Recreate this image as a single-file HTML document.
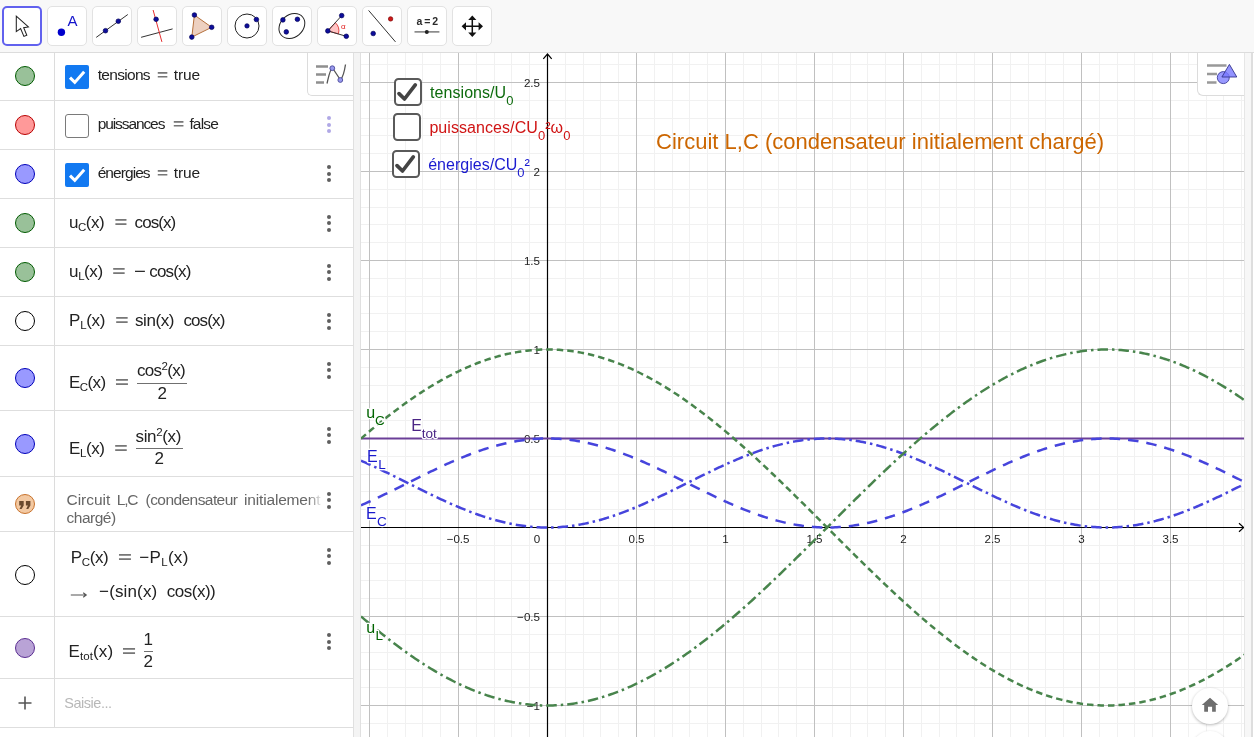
<!DOCTYPE html>
<html lang="fr"><head><meta charset="utf-8"><title>Circuit L,C</title>
<style>
html,body{margin:0;padding:0;width:1254px;height:737px;overflow:hidden;background:#fff;font-family:"Liberation Sans",Arial,sans-serif;}
*{box-sizing:border-box;}
#tb{will-change:transform;position:absolute;left:0;top:0;width:1254px;height:53px;background:#f8f8f8;border-bottom:1px solid #dcdcdc;}
.tbtn{position:absolute;top:6px;width:40px;height:40px;background:#fff;border:1px solid #e2e2e2;border-radius:5px;}
.tbtn.sel{border:2px solid #6161ee;}
.tbtn svg{position:absolute;left:-1px;top:-1px;width:40px;height:40px;}
.tbtn.sel svg{left:-2px;top:-2px;}
#av{will-change:transform;position:absolute;left:0;top:53px;width:353px;height:684px;background:#fff;overflow:hidden;}
.row{position:absolute;left:0;width:353px;border-bottom:1px solid #dedede;}
.row .mc{position:absolute;left:0;top:0;bottom:0;width:55px;border-right:1px solid #dcdcdc;}
.marble{position:absolute;left:15px;width:20px;height:20px;border-radius:50%;border:1px solid #000;}
.t{position:absolute;white-space:nowrap;color:#222;font-size:15.5px;line-height:20px;}
.t sub{font-size:11.5px;vertical-align:baseline;position:relative;top:3px;line-height:0;}
.t sup{font-size:11.5px;vertical-align:baseline;position:relative;top:-6px;line-height:0;}
.dots{position:absolute;left:326px;width:6px;height:18px;}
.dots i{position:absolute;left:1px;width:4px;height:4px;border-radius:50%;background:#5f5f5f;}
.dots i:nth-child(1){top:0}.dots i:nth-child(2){top:6.5px}.dots i:nth-child(3){top:13px}
.dots.lav i{background:#b0a8e6;}
.cb{position:absolute;left:65px;width:24px;height:24px;border-radius:2px;}
.cb.on{background:#1279f1;}
.cb.off{background:#fff;border:1px solid #7a7a7a;border-radius:3px;}
.frac{position:absolute;text-align:center;}
.bar{position:absolute;height:1px;background:#707070;}
#split{position:absolute;left:353px;top:53px;width:8px;height:684px;background:#f4f4f4;border-left:1px solid #e0e0e0;border-right:1px solid #e0e0e0;}
#ev{will-change:transform;position:absolute;left:361px;top:53px;width:883px;height:684px;background:#fff;overflow:hidden;}
#ev svg.g{position:absolute;left:0;top:0;}
#rs{position:absolute;left:1244px;top:53px;width:10px;height:684px;background:#f7f7f7;border-left:1px solid #e6e6e6;}
#rs b{position:absolute;left:6px;top:0;width:2px;height:684px;background:#dedede;}
#rs u{position:absolute;left:8px;top:0;width:1px;height:684px;background:#fff;}
.evcb{position:absolute;width:28px;height:28px;border:2px solid #5a5a5a;border-radius:4.5px;background:#fff;}
.evt{position:absolute;white-space:nowrap;font-size:16px;line-height:18px;}
.evt sub{font-size:13px;vertical-align:baseline;position:relative;top:7px;line-height:0;}
.evt sup{font-size:11px;vertical-align:baseline;position:relative;top:-5px;line-height:0;font-weight:bold;}
.stylebtn{position:absolute;background:#fff;border:1px solid #dcdcdc;}
</style></head>
<body>
<div id="tb">
<div class="tbtn sel" style="left:2px"><svg viewBox="0 0 40 40"><path d="M14.3 10.2 V25.6 L18.6 22.6 L21.9 30.4 L24.8 29.2 L21.7 21.7 L26.4 20.9 Z" fill="#fff" stroke="#222" stroke-width="1.05" stroke-linejoin="miter"/></svg></div>
<div class="tbtn" style="left:47px"><svg viewBox="0 0 40 40"><circle cx="14.4" cy="26.2" r="3.7" fill="#0000cc"/><text x="20.6" y="20" font-family="Liberation Sans,Arial,sans-serif" font-size="15" fill="#1414cc">A</text></svg></div>
<div class="tbtn" style="left:92px"><svg viewBox="0 0 40 40"><path d="M4.2 31.4 L35.8 8.5" stroke="#333" stroke-width="1"/><circle cx="13.5" cy="24.7" r="2.3" fill="#0d0d9a" stroke="#00005a" stroke-width="0.7"/><circle cx="26.3" cy="15.2" r="2.3" fill="#0d0d9a" stroke="#00005a" stroke-width="0.7"/></svg></div>
<div class="tbtn" style="left:137px"><svg viewBox="0 0 40 40"><path d="M4.1 31.3 L35.6 22.9" stroke="#333" stroke-width="1"/><path d="M16.1 4 L24.9 35.9" stroke="#e63030" stroke-width="1"/><circle cx="19.1" cy="13.3" r="2.3" fill="#0d0d9a" stroke="#00005a" stroke-width="0.7"/></svg></div>
<div class="tbtn" style="left:182px"><svg viewBox="0 0 40 40"><path d="M12.4 9 L29.7 21.3 L9.8 31.1 Z" fill="#edd0c0" stroke="#b5703c" stroke-width="1"/><circle cx="12.4" cy="9" r="2.3" fill="#0d0d9a" stroke="#00005a" stroke-width="0.7"/><circle cx="29.7" cy="21.3" r="2.3" fill="#0d0d9a" stroke="#00005a" stroke-width="0.7"/><circle cx="9.8" cy="31.1" r="2.3" fill="#0d0d9a" stroke="#00005a" stroke-width="0.7"/></svg></div>
<div class="tbtn" style="left:227px"><svg viewBox="0 0 40 40"><circle cx="20" cy="20" r="12" fill="none" stroke="#222" stroke-width="1"/><circle cx="20" cy="19.9" r="2.2" fill="#0d0d9a" stroke="#00005a" stroke-width="0.7"/><circle cx="29.4" cy="13.5" r="2.3" fill="#0d0d9a" stroke="#00005a" stroke-width="0.7"/></svg></div>
<div class="tbtn" style="left:272px"><svg viewBox="0 0 40 40"><ellipse cx="19.9" cy="20" rx="14" ry="11.2" transform="rotate(-40 19.9 20)" fill="none" stroke="#222" stroke-width="1"/><circle cx="10.9" cy="13.9" r="2.3" fill="#0d0d9a" stroke="#00005a" stroke-width="0.7"/><circle cx="25.4" cy="13.3" r="2.3" fill="#0d0d9a" stroke="#00005a" stroke-width="0.7"/><circle cx="14.3" cy="25.9" r="2.3" fill="#0d0d9a" stroke="#00005a" stroke-width="0.7"/></svg></div>
<div class="tbtn" style="left:317px"><svg viewBox="0 0 40 40"><path d="M10.8 24.9 L18.3 16.7 A11 11 0 0 1 21.4 27.9 Z" fill="#ffc4c4" stroke="#e03030" stroke-width="0.9"/><path d="M24.7 9.6 L10.8 24.9 L29.3 30.3" fill="none" stroke="#333" stroke-width="1"/><circle cx="10.8" cy="24.9" r="2.3" fill="#0d0d9a" stroke="#00005a" stroke-width="0.7"/><circle cx="24.7" cy="9.6" r="2.3" fill="#0d0d9a" stroke="#00005a" stroke-width="0.7"/><circle cx="29.3" cy="30.3" r="2.3" fill="#0d0d9a" stroke="#00005a" stroke-width="0.7"/><text x="24" y="23" font-family="Liberation Sans,Arial,sans-serif" font-size="8" fill="#e02020">α</text></svg></div>
<div class="tbtn" style="left:362px"><svg viewBox="0 0 40 40"><path d="M6.6 4.4 L33.5 35.9" stroke="#333" stroke-width="1"/><circle cx="11.2" cy="27.5" r="2.3" fill="#0d0d9a" stroke="#00005a" stroke-width="0.7"/><circle cx="28.6" cy="12.9" r="2.2" fill="#cc1a1a" stroke="#800000" stroke-width="0.7"/></svg></div>
<div class="tbtn" style="left:407px"><svg viewBox="0 0 40 40"><text x="20" y="18.8" text-anchor="middle" font-family="Liberation Sans,Arial,sans-serif" font-size="10.5" font-weight="bold" letter-spacing="-0.5" fill="#2a2a2a">a = 2</text><path d="M7.5 25.9 H32.4" stroke="#666" stroke-width="1.3"/><circle cx="19.8" cy="25.9" r="2" fill="#222"/></svg></div>
<div class="tbtn" style="left:452px"><svg viewBox="0 0 40 40"><path d="M20.3 12 V28.6 M12 20.3 H28.6" stroke="#111" stroke-width="1.5"/><path d="M20.3 9.6 l4.1 4.4 h-8.2z M20.3 31 l4.1 -4.4 h-8.2z M9.6 20.3 l4.4 -4.1 v8.2z M31 20.3 l-4.4 -4.1 v8.2z" fill="#111"/></svg></div>

</div>
<div id="av">
<div class="row" style="top:0px;height:48px"><div class="mc"></div></div>
<div class="marble" style="top:12.5px;background:#99c199;border-color:#005a00"></div>
<div class="row" style="top:48px;height:49px"><div class="mc"></div></div>
<div class="marble" style="top:61.5px;background:#ff9999;border-color:#b80000"></div>
<div class="dots lav" style="top:63.0px"><i></i><i></i><i></i></div>
<div class="row" style="top:97px;height:49px"><div class="mc"></div></div>
<div class="marble" style="top:110.5px;background:#9999ff;border-color:#0000b8"></div>
<div class="dots " style="top:112.0px"><i></i><i></i><i></i></div>
<div class="row" style="top:146px;height:49px"><div class="mc"></div></div>
<div class="marble" style="top:160.0px;background:#99c199;border-color:#005a00"></div>
<div class="dots " style="top:161.5px"><i></i><i></i><i></i></div>
<div class="row" style="top:195px;height:49px"><div class="mc"></div></div>
<div class="marble" style="top:209.0px;background:#99c199;border-color:#005a00"></div>
<div class="dots " style="top:210.5px"><i></i><i></i><i></i></div>
<div class="row" style="top:244px;height:49px"><div class="mc"></div></div>
<div class="marble" style="top:258.0px;background:#fff;border-color:#000"></div>
<div class="dots " style="top:259.5px"><i></i><i></i><i></i></div>
<div class="row" style="top:293px;height:65px"><div class="mc"></div></div>
<div class="marble" style="top:315.0px;background:#9999ff;border-color:#0000b8"></div>
<div class="dots " style="top:308.5px"><i></i><i></i><i></i></div>
<div class="row" style="top:358px;height:66px"><div class="mc"></div></div>
<div class="marble" style="top:380.5px;background:#9999ff;border-color:#0000b8"></div>
<div class="dots " style="top:373.5px"><i></i><i></i><i></i></div>
<div class="row" style="top:424px;height:55px"><div class="mc"></div></div>
<div class="dots " style="top:438.5px"><i></i><i></i><i></i></div>
<div class="row" style="top:479px;height:85px"><div class="mc"></div></div>
<div class="marble" style="top:511.5px;background:#fff;border-color:#000"></div>
<div class="dots " style="top:494.5px"><i></i><i></i><i></i></div>
<div class="row" style="top:564px;height:62px"><div class="mc"></div></div>
<div class="marble" style="top:585.0px;background:#b9a3d6;border-color:#5a2d91"></div>
<div class="dots " style="top:580.0px"><i></i><i></i><i></i></div>
<div class="row" style="top:626px;height:49px"><div class="mc"></div></div>
<div class="cb on" style="top:12px"><svg viewBox="0 0 24 24" width="24" height="24" style="position:absolute;left:0;top:0"><path d="M5 12.6 L9.8 17.4 L19.2 6.8" fill="none" stroke="#fff" stroke-width="3"/></svg></div><div class="cb off" style="top:61px"></div><div class="cb on" style="top:110px"><svg viewBox="0 0 24 24" width="24" height="24" style="position:absolute;left:0;top:0"><path d="M5 12.6 L9.8 17.4 L19.2 6.8" fill="none" stroke="#fff" stroke-width="3"/></svg></div>
<div class="marble" style="top:441.0px;background:#f3c9a2;border-color:#c8722c"><svg viewBox="0 0 18 18" width="18" height="18" style="position:absolute;left:0;top:0"><path d="M3.2 6h4.5v4.6l-2.1 3.3h-2.1l1.7-3.3h-2z M9.9 6h4.5v4.6l-2.1 3.3h-2.1l1.7-3.3h-2z" fill="#6b4a2e"/></svg></div>
<svg style="position:absolute;left:17px;top:642px" width="16" height="16" viewBox="0 0 16 16"><path d="M8 1.5 V14.5 M1.5 8 H14.5" stroke="#555" stroke-width="1.6"/></svg>
<div class="stylebtn" style="left:307px;top:-1px;width:47px;height:44px;border-radius:0 0 0 5px;border-top:none;border-right:none"><svg viewBox="0 0 46 43" width="46" height="43" style="position:absolute;left:-0.8px;top:0.9px"><path d="M9 13.5h12 M9 21.5h10 M9 29.5h8" stroke="#8f8f8f" stroke-width="2.4"/><path d="M20 30.5 C22 22 23 16 25.5 15 L33.5 27 C36 24 37.5 18 38.5 11.5" fill="none" stroke="#555" stroke-width="1.3"/><circle cx="25.3" cy="15.2" r="2.4" fill="#9999ee" stroke="#4a4a9a" stroke-width="0.9"/><circle cx="33.3" cy="27" r="2.4" fill="#9999ee" stroke="#4a4a9a" stroke-width="0.9"/></svg></div>
<svg style="position:absolute;left:70px;top:537.3px" width="18" height="10" viewBox="0 0 18 10"><path d="M0.8 5 H16 M13.2 2.8 L16.2 5 L13.2 7.2" fill="none" stroke="#555" stroke-width="1.15"/></svg>
<div class="bar" style="left:136.8px;top:329.7px;width:50.6px"></div>
<div class="bar" style="left:135.9px;top:395.3px;width:47.1px"></div>
<div class="bar" style="left:143.9px;top:597.8px;width:8.9px"></div>
<div class="t" id="t0" style="left:97.7px;top:12.13px;letter-spacing:-0.691px;font-size:15.5px;">tensions</div>
<div class="t" id="t1" style="left:158.1px;top:12.13px;letter-spacing:0.000px;font-size:15.5px;transform:scaleX(1.226);font-weight:bold;color:#777;">=</div>
<div class="t" id="t2" style="left:173.8px;top:12.13px;letter-spacing:-0.106px;font-size:15.5px;">true</div>
<div class="t" id="t3" style="left:97.7px;top:61.13px;letter-spacing:-1.094px;font-size:15.5px;">puissances</div>
<div class="t" id="t4" style="left:173.7px;top:61.13px;letter-spacing:0.000px;font-size:15.5px;transform:scaleX(1.239);font-weight:bold;color:#777;">=</div>
<div class="t" id="t5" style="left:189.4px;top:61.13px;letter-spacing:-0.837px;font-size:15.5px;">false</div>
<div class="t" id="t6" style="left:97.7px;top:110.13px;letter-spacing:-0.938px;font-size:15.5px;">énergies</div>
<div class="t" id="t7" style="left:158.1px;top:110.13px;letter-spacing:0.000px;font-size:15.5px;transform:scaleX(1.226);font-weight:bold;color:#777;">=</div>
<div class="t" id="t8" style="left:173.8px;top:110.13px;letter-spacing:-0.106px;font-size:15.5px;">true</div>
<div class="t" id="t9" style="left:69.1px;top:160.01px;letter-spacing:-0.527px;font-size:17px;">u<sub>C</sub>(x)</div>
<div class="t" id="t10" style="left:115.7px;top:160.01px;letter-spacing:0.000px;font-size:17px;transform:scaleX(1.294);font-weight:bold;color:#777;">=</div>
<div class="t" id="t11" style="left:134.6px;top:160.01px;letter-spacing:-0.936px;font-size:17px;">cos(x)</div>
<div class="t" id="t12" style="left:69.1px;top:209.21px;letter-spacing:-0.426px;font-size:17px;">u<sub>L</sub>(x)</div>
<div class="t" id="t13" style="left:114.1px;top:209.21px;letter-spacing:0.000px;font-size:17px;transform:scaleX(1.341);font-weight:bold;color:#777;">=</div>
<div class="t" id="t14" style="left:134.8px;top:209.21px;letter-spacing:0.000px;font-size:17px;transform:scaleX(1.198);">−</div>
<div class="t" id="t15" style="left:149.3px;top:209.21px;letter-spacing:-0.836px;font-size:17px;">cos(x)</div>
<div class="t" id="t16" style="left:69.1px;top:258.11px;letter-spacing:-0.320px;font-size:17px;">P<sub>L</sub>(x)</div>
<div class="t" id="t17" style="left:116.5px;top:258.11px;letter-spacing:0.000px;font-size:17px;transform:scaleX(1.341);font-weight:bold;color:#777;">=</div>
<div class="t" id="t18" style="left:135.0px;top:258.11px;letter-spacing:-0.433px;font-size:17px;">sin(x)</div>
<div class="t" id="t19" style="left:183.4px;top:258.11px;letter-spacing:-0.876px;font-size:17px;">cos(x)</div>
<div class="t" id="t20" style="left:69.0px;top:320.21px;letter-spacing:-0.596px;font-size:17px;">E<sub>C</sub>(x)</div>
<div class="t" id="t21" style="left:117.0px;top:320.21px;letter-spacing:0.000px;font-size:17px;transform:scaleX(1.400);font-weight:bold;color:#777;">=</div>
<div class="t" id="t22" style="left:136.9px;top:307.91px;letter-spacing:-0.634px;font-size:17px;">cos<sup>2</sup>(x)</div>
<div class="t" id="t23" style="left:157.6px;top:330.91px;letter-spacing:0.000px;font-size:17px;">2</div>
<div class="t" id="t24" style="left:69.0px;top:385.71px;letter-spacing:-0.420px;font-size:17px;">E<sub>L</sub>(x)</div>
<div class="t" id="t25" style="left:115.9px;top:385.71px;letter-spacing:0.000px;font-size:17px;transform:scaleX(1.353);font-weight:bold;color:#777;">=</div>
<div class="t" id="t26" style="left:135.6px;top:374.31px;letter-spacing:-0.378px;font-size:17px;">sin<sup>2</sup>(x)</div>
<div class="t" id="t27" style="left:154.4px;top:396.31px;letter-spacing:0.000px;font-size:17px;">2</div>
<div class="t" id="t28" style="left:66.6px;top:437.13px;letter-spacing:-0.054px;font-size:15.5px;color:#666;">Circuit</div>
<div class="t" id="t29" style="left:116.7px;top:437.13px;letter-spacing:-1.162px;font-size:15.5px;color:#666;">L,C</div>
<div class="t" id="t30" style="left:145.6px;top:437.13px;letter-spacing:-0.566px;font-size:15.5px;color:#666;">(condensateur</div>
<div class="t" id="t31" style="left:244.1px;top:437.13px;letter-spacing:-0.182px;font-size:15.5px;color:#666;">initialement</div>
<div class="t" id="t32" style="left:66.6px;top:454.93px;letter-spacing:-0.510px;font-size:15.5px;color:#666;">chargé)</div>
<div class="t" id="t33" style="left:70.8px;top:494.91px;letter-spacing:-0.371px;font-size:17px;">P<sub>C</sub>(x)</div>
<div class="t" id="t34" style="left:119.9px;top:494.91px;letter-spacing:0.000px;font-size:17px;transform:scaleX(1.400);font-weight:bold;color:#777;">=</div>
<div class="t" id="t35" style="left:139.3px;top:494.91px;letter-spacing:0.297px;font-size:17px;">−P<sub>L</sub>(x)</div>
<div class="t" id="t36" style="left:99.1px;top:529.41px;letter-spacing:0.135px;font-size:17px;">−(sin(x)</div>
<div class="t" id="t37" style="left:166.8px;top:529.41px;letter-spacing:-0.492px;font-size:17px;">cos(x))</div>
<div class="t" id="t38" style="left:68.5px;top:588.61px;letter-spacing:0.105px;font-size:17px;">E<sub>tot</sub>(x)</div>
<div class="t" id="t39" style="left:123.5px;top:588.61px;letter-spacing:0.000px;font-size:17px;transform:scaleX(1.412);font-weight:bold;color:#777;">=</div>
<div class="t" id="t40" style="left:143.6px;top:576.51px;letter-spacing:0.000px;font-size:17px;">1</div>
<div class="t" id="t41" style="left:143.6px;top:599.11px;letter-spacing:0.000px;font-size:17px;">2</div>
<div class="t" id="t42" style="left:64.3px;top:639.78px;letter-spacing:-0.474px;font-size:14.5px;color:#b8b8b8;">Saisie...</div>
<div style="position:absolute;left:308px;top:437px;width:16px;height:20px;background:linear-gradient(to right,rgba(255,255,255,0),rgba(255,255,255,0.9) 85%)"></div>

</div>
<div id="split"></div>
<div id="ev">
<svg class="g" width="883" height="684" viewBox="361 53 883 684">
<path d="M387.5 53 V737M405.5 53 V737M422.5 53 V737M440.5 53 V737M476.5 53 V737M494.5 53 V737M511.5 53 V737M529.5 53 V737M565.5 53 V737M583.5 53 V737M600.5 53 V737M618.5 53 V737M654.5 53 V737M672.5 53 V737M689.5 53 V737M707.5 53 V737M743.5 53 V737M761.5 53 V737M778.5 53 V737M796.5 53 V737M832.5 53 V737M850.5 53 V737M867.5 53 V737M885.5 53 V737M921.5 53 V737M939.5 53 V737M956.5 53 V737M974.5 53 V737M1010.5 53 V737M1028.5 53 V737M1045.5 53 V737M1063.5 53 V737M1099.5 53 V737M1117.5 53 V737M1134.5 53 V737M1152.5 53 V737M1188.5 53 V737M1206.5 53 V737M1223.5 53 V737M1241.5 53 V737M361 64.5 H1244M361 100.5 H1244M361 118.5 H1244M361 135.5 H1244M361 153.5 H1244M361 189.5 H1244M361 207.5 H1244M361 224.5 H1244M361 242.5 H1244M361 278.5 H1244M361 296.5 H1244M361 313.5 H1244M361 331.5 H1244M361 367.5 H1244M361 385.5 H1244M361 402.5 H1244M361 420.5 H1244M361 456.5 H1244M361 474.5 H1244M361 491.5 H1244M361 509.5 H1244M361 545.5 H1244M361 563.5 H1244M361 580.5 H1244M361 598.5 H1244M361 634.5 H1244M361 652.5 H1244M361 669.5 H1244M361 687.5 H1244M361 723.5 H1244" stroke="#f1f1f1" stroke-width="1" fill="none"/><path d="M369.5 53 V737M458.5 53 V737M636.5 53 V737M725.5 53 V737M814.5 53 V737M903.5 53 V737M992.5 53 V737M1081.5 53 V737M1170.5 53 V737M361 82.5 H1244M361 171.5 H1244M361 260.5 H1244M361 349.5 H1244M361 438.5 H1244M361 616.5 H1244M361 705.5 H1244" stroke="#c0c0c0" stroke-width="1" fill="none"/><path d="M361 527.5 H1243.5 M547.5 737 V54.5" stroke="#000" stroke-width="1.2" fill="none"/><path d="M1239.0 523.3 L1243.8 527.5 L1239.0 531.7" stroke="#000" stroke-width="1.2" fill="none"/><path d="M543.3 58.8 L547.5 54.0 L551.7 58.8" stroke="#000" stroke-width="1.2" fill="none"/><g font-family="Liberation Sans, Arial, sans-serif" font-size="11.6" fill="#222"><text x="458.1" y="542.6" text-anchor="middle">−0.5</text><text x="636.5" y="542.6" text-anchor="middle">0.5</text><text x="725.5" y="542.6" text-anchor="middle">1</text><text x="814.5" y="542.6" text-anchor="middle">1.5</text><text x="903.5" y="542.6" text-anchor="middle">2</text><text x="992.5" y="542.6" text-anchor="middle">2.5</text><text x="1081.5" y="542.6" text-anchor="middle">3</text><text x="1170.5" y="542.6" text-anchor="middle">3.5</text><text x="537" y="542.6" text-anchor="middle">0</text><text x="540" y="86.8" text-anchor="end">2.5</text><text x="540" y="175.8" text-anchor="end">2</text><text x="540" y="264.8" text-anchor="end">1.5</text><text x="540" y="353.8" text-anchor="end">1</text><text x="540" y="442.8" text-anchor="end">0.5</text><text x="540" y="620.8" text-anchor="end">−0.5</text><text x="540" y="709.8" text-anchor="end">−1</text></g><path d="M361 438.5 H1244" stroke="#6b3f98" stroke-width="2.15" fill="none"/><path d="M361.00 505.29 L363.00 504.42 L365.00 503.54 L367.00 502.65 L369.00 501.75 L371.00 500.83 L373.00 499.91 L375.00 498.98 L377.00 498.05 L379.00 497.10 L381.00 496.15 L383.00 495.19 L385.00 494.23 L387.00 493.26 L389.00 492.28 L391.00 491.30 L393.00 490.32 L395.00 489.33 L397.00 488.34 L399.00 487.34 L401.00 486.35 L403.00 485.35 L405.00 484.35 L407.00 483.35 L409.00 482.35 L411.00 481.35 L413.00 480.35 L415.00 479.35 L417.00 478.36 L419.00 477.36 L421.00 476.37 L423.00 475.39 L425.00 474.40 L427.00 473.43 L429.00 472.45 L431.00 471.48 L433.00 470.52 L435.00 469.56 L437.00 468.61 L439.00 467.67 L441.00 466.74 L443.00 465.81 L445.00 464.89 L447.00 463.98 L449.00 463.08 L451.00 462.19 L453.00 461.32 L455.00 460.45 L457.00 459.59 L459.00 458.75 L461.00 457.91 L463.00 457.09 L465.00 456.29 L467.00 455.50 L469.00 454.72 L471.00 453.95 L473.00 453.20 L475.00 452.47 L477.00 451.75 L479.00 451.04 L481.00 450.35 L483.00 449.68 L485.00 449.03 L487.00 448.39 L489.00 447.77 L491.00 447.17 L493.00 446.59 L495.00 446.02 L497.00 445.47 L499.00 444.95 L501.00 444.44 L503.00 443.95 L505.00 443.48 L507.00 443.03 L509.00 442.60 L511.00 442.19 L513.00 441.80 L515.00 441.43 L517.00 441.09 L519.00 440.76 L521.00 440.46 L523.00 440.18 L525.00 439.91 L527.00 439.68 L529.00 439.46 L531.00 439.26 L533.00 439.09 L535.00 438.94 L537.00 438.81 L539.00 438.70 L541.00 438.62 L543.00 438.56 L545.00 438.52 L547.00 438.50 L549.00 438.51 L551.00 438.53 L553.00 438.58 L555.00 438.66 L557.00 438.75 L559.00 438.87 L561.00 439.01 L563.00 439.17 L565.00 439.36 L567.00 439.56 L569.00 439.79 L571.00 440.04 L573.00 440.31 L575.00 440.61 L577.00 440.92 L579.00 441.26 L581.00 441.62 L583.00 441.99 L585.00 442.39 L587.00 442.81 L589.00 443.25 L591.00 443.71 L593.00 444.19 L595.00 444.69 L597.00 445.21 L599.00 445.74 L601.00 446.30 L603.00 446.88 L605.00 447.47 L607.00 448.08 L609.00 448.71 L611.00 449.35 L613.00 450.02 L615.00 450.70 L617.00 451.39 L619.00 452.10 L621.00 452.83 L623.00 453.57 L625.00 454.33 L627.00 455.10 L629.00 455.89 L631.00 456.69 L633.00 457.50 L635.00 458.33 L637.00 459.17 L639.00 460.02 L641.00 460.88 L643.00 461.75 L645.00 462.64 L647.00 463.53 L649.00 464.44 L651.00 465.35 L653.00 466.27 L655.00 467.20 L657.00 468.14 L659.00 469.09 L661.00 470.04 L663.00 471.00 L665.00 471.97 L667.00 472.94 L669.00 473.91 L671.00 474.90 L673.00 475.88 L675.00 476.87 L677.00 477.86 L679.00 478.86 L681.00 479.85 L683.00 480.85 L685.00 481.85 L687.00 482.85 L689.00 483.85 L691.00 484.85 L693.00 485.85 L695.00 486.84 L697.00 487.84 L699.00 488.83 L701.00 489.82 L703.00 490.81 L705.00 491.79 L707.00 492.77 L709.00 493.74 L711.00 494.71 L713.00 495.67 L715.00 496.63 L717.00 497.58 L719.00 498.52 L721.00 499.45 L723.00 500.37 L725.00 501.29 L727.00 502.20 L729.00 503.10 L731.00 503.98 L733.00 504.86 L735.00 505.72 L737.00 506.58 L739.00 507.42 L741.00 508.25 L743.00 509.07 L745.00 509.87 L747.00 510.66 L749.00 511.44 L751.00 512.20 L753.00 512.95 L755.00 513.68 L757.00 514.39 L759.00 515.10 L761.00 515.78 L763.00 516.45 L765.00 517.10 L767.00 517.73 L769.00 518.35 L771.00 518.95 L773.00 519.53 L775.00 520.09 L777.00 520.63 L779.00 521.16 L781.00 521.66 L783.00 522.15 L785.00 522.61 L787.00 523.06 L789.00 523.48 L791.00 523.89 L793.00 524.27 L795.00 524.64 L797.00 524.98 L799.00 525.30 L801.00 525.60 L803.00 525.88 L805.00 526.13 L807.00 526.37 L809.00 526.58 L811.00 526.77 L813.00 526.94 L815.00 527.09 L817.00 527.21 L819.00 527.32 L821.00 527.40 L823.00 527.45 L825.00 527.49 L827.00 527.50 L829.00 527.49 L831.00 527.46 L833.00 527.40 L835.00 527.32 L837.00 527.23 L839.00 527.10 L841.00 526.96 L843.00 526.79 L845.00 526.60 L847.00 526.39 L849.00 526.16 L851.00 525.91 L853.00 525.63 L855.00 525.33 L857.00 525.01 L859.00 524.67 L861.00 524.31 L863.00 523.93 L865.00 523.53 L867.00 523.10 L869.00 522.66 L871.00 522.20 L873.00 521.71 L875.00 521.21 L877.00 520.69 L879.00 520.15 L881.00 519.59 L883.00 519.01 L885.00 518.41 L887.00 517.80 L889.00 517.16 L891.00 516.52 L893.00 515.85 L895.00 515.17 L897.00 514.47 L899.00 513.75 L901.00 513.02 L903.00 512.28 L905.00 511.52 L907.00 510.74 L909.00 509.95 L911.00 509.15 L913.00 508.33 L915.00 507.51 L917.00 506.66 L919.00 505.81 L921.00 504.95 L923.00 504.07 L925.00 503.19 L927.00 502.29 L929.00 501.38 L931.00 500.47 L933.00 499.54 L935.00 498.61 L937.00 497.67 L939.00 496.72 L941.00 495.77 L943.00 494.81 L945.00 493.84 L947.00 492.87 L949.00 491.89 L951.00 490.91 L953.00 489.92 L955.00 488.93 L957.00 487.94 L959.00 486.95 L961.00 485.95 L963.00 484.95 L965.00 483.95 L967.00 482.95 L969.00 481.95 L971.00 480.95 L973.00 479.95 L975.00 478.96 L977.00 477.96 L979.00 476.97 L981.00 475.98 L983.00 475.00 L985.00 474.01 L987.00 473.04 L989.00 472.06 L991.00 471.10 L993.00 470.14 L995.00 469.18 L997.00 468.24 L999.00 467.30 L1001.00 466.37 L1003.00 465.44 L1005.00 464.53 L1007.00 463.62 L1009.00 462.73 L1011.00 461.84 L1013.00 460.97 L1015.00 460.10 L1017.00 459.25 L1019.00 458.41 L1021.00 457.59 L1023.00 456.77 L1025.00 455.97 L1027.00 455.18 L1029.00 454.41 L1031.00 453.65 L1033.00 452.91 L1035.00 452.18 L1037.00 451.46 L1039.00 450.77 L1041.00 450.09 L1043.00 449.42 L1045.00 448.77 L1047.00 448.14 L1049.00 447.53 L1051.00 446.94 L1053.00 446.36 L1055.00 445.80 L1057.00 445.26 L1059.00 444.74 L1061.00 444.24 L1063.00 443.76 L1065.00 443.30 L1067.00 442.86 L1069.00 442.43 L1071.00 442.03 L1073.00 441.65 L1075.00 441.29 L1077.00 440.96 L1079.00 440.64 L1081.00 440.34 L1083.00 440.07 L1085.00 439.82 L1087.00 439.59 L1089.00 439.38 L1091.00 439.19 L1093.00 439.03 L1095.00 438.88 L1097.00 438.76 L1099.00 438.67 L1101.00 438.59 L1103.00 438.54 L1105.00 438.51 L1107.00 438.50 L1109.00 438.51 L1111.00 438.55 L1113.00 438.61 L1115.00 438.69 L1117.00 438.80 L1119.00 438.92 L1121.00 439.07 L1123.00 439.24 L1125.00 439.44 L1127.00 439.65 L1129.00 439.89 L1131.00 440.15 L1133.00 440.43 L1135.00 440.73 L1137.00 441.05 L1139.00 441.40 L1141.00 441.76 L1143.00 442.15 L1145.00 442.56 L1147.00 442.98 L1149.00 443.43 L1151.00 443.90 L1153.00 444.39 L1155.00 444.89 L1157.00 445.42 L1159.00 445.96 L1161.00 446.53 L1163.00 447.11 L1165.00 447.71 L1167.00 448.33 L1169.00 448.96 L1171.00 449.62 L1173.00 450.29 L1175.00 450.97 L1177.00 451.67 L1179.00 452.39 L1181.00 453.13 L1183.00 453.87 L1185.00 454.64 L1187.00 455.42 L1189.00 456.21 L1191.00 457.01 L1193.00 457.83 L1195.00 458.66 L1197.00 459.50 L1199.00 460.36 L1201.00 461.23 L1203.00 462.10 L1205.00 462.99 L1207.00 463.89 L1209.00 464.80 L1211.00 465.71 L1213.00 466.64 L1215.00 467.57 L1217.00 468.52 L1219.00 469.47 L1221.00 470.42 L1223.00 471.38 L1225.00 472.35 L1227.00 473.33 L1229.00 474.30 L1231.00 475.29 L1233.00 476.27 L1235.00 477.26 L1237.00 478.26 L1239.00 479.25 L1241.00 480.25 L1243.00 481.25 L1245.00 482.25" stroke="#4644dc" stroke-width="2.5" fill="none" stroke-dasharray="10.5 8"/><path d="M361.00 460.71 L363.00 461.58 L365.00 462.46 L367.00 463.35 L369.00 464.25 L371.00 465.17 L373.00 466.09 L375.00 467.02 L377.00 467.95 L379.00 468.90 L381.00 469.85 L383.00 470.81 L385.00 471.77 L387.00 472.74 L389.00 473.72 L391.00 474.70 L393.00 475.68 L395.00 476.67 L397.00 477.66 L399.00 478.66 L401.00 479.65 L403.00 480.65 L405.00 481.65 L407.00 482.65 L409.00 483.65 L411.00 484.65 L413.00 485.65 L415.00 486.65 L417.00 487.64 L419.00 488.64 L421.00 489.63 L423.00 490.61 L425.00 491.60 L427.00 492.57 L429.00 493.55 L431.00 494.52 L433.00 495.48 L435.00 496.44 L437.00 497.39 L439.00 498.33 L441.00 499.26 L443.00 500.19 L445.00 501.11 L447.00 502.02 L449.00 502.92 L451.00 503.81 L453.00 504.68 L455.00 505.55 L457.00 506.41 L459.00 507.25 L461.00 508.09 L463.00 508.91 L465.00 509.71 L467.00 510.50 L469.00 511.28 L471.00 512.05 L473.00 512.80 L475.00 513.53 L477.00 514.25 L479.00 514.96 L481.00 515.65 L483.00 516.32 L485.00 516.97 L487.00 517.61 L489.00 518.23 L491.00 518.83 L493.00 519.41 L495.00 519.98 L497.00 520.53 L499.00 521.05 L501.00 521.56 L503.00 522.05 L505.00 522.52 L507.00 522.97 L509.00 523.40 L511.00 523.81 L513.00 524.20 L515.00 524.57 L517.00 524.91 L519.00 525.24 L521.00 525.54 L523.00 525.82 L525.00 526.09 L527.00 526.32 L529.00 526.54 L531.00 526.74 L533.00 526.91 L535.00 527.06 L537.00 527.19 L539.00 527.30 L541.00 527.38 L543.00 527.44 L545.00 527.48 L547.00 527.50 L549.00 527.49 L551.00 527.47 L553.00 527.42 L555.00 527.34 L557.00 527.25 L559.00 527.13 L561.00 526.99 L563.00 526.83 L565.00 526.64 L567.00 526.44 L569.00 526.21 L571.00 525.96 L573.00 525.69 L575.00 525.39 L577.00 525.08 L579.00 524.74 L581.00 524.38 L583.00 524.01 L585.00 523.61 L587.00 523.19 L589.00 522.75 L591.00 522.29 L593.00 521.81 L595.00 521.31 L597.00 520.79 L599.00 520.26 L601.00 519.70 L603.00 519.12 L605.00 518.53 L607.00 517.92 L609.00 517.29 L611.00 516.65 L613.00 515.98 L615.00 515.30 L617.00 514.61 L619.00 513.90 L621.00 513.17 L623.00 512.43 L625.00 511.67 L627.00 510.90 L629.00 510.11 L631.00 509.31 L633.00 508.50 L635.00 507.67 L637.00 506.83 L639.00 505.98 L641.00 505.12 L643.00 504.25 L645.00 503.36 L647.00 502.47 L649.00 501.56 L651.00 500.65 L653.00 499.73 L655.00 498.80 L657.00 497.86 L659.00 496.91 L661.00 495.96 L663.00 495.00 L665.00 494.03 L667.00 493.06 L669.00 492.09 L671.00 491.10 L673.00 490.12 L675.00 489.13 L677.00 488.14 L679.00 487.14 L681.00 486.15 L683.00 485.15 L685.00 484.15 L687.00 483.15 L689.00 482.15 L691.00 481.15 L693.00 480.15 L695.00 479.16 L697.00 478.16 L699.00 477.17 L701.00 476.18 L703.00 475.19 L705.00 474.21 L707.00 473.23 L709.00 472.26 L711.00 471.29 L713.00 470.33 L715.00 469.37 L717.00 468.42 L719.00 467.48 L721.00 466.55 L723.00 465.63 L725.00 464.71 L727.00 463.80 L729.00 462.90 L731.00 462.02 L733.00 461.14 L735.00 460.28 L737.00 459.42 L739.00 458.58 L741.00 457.75 L743.00 456.93 L745.00 456.13 L747.00 455.34 L749.00 454.56 L751.00 453.80 L753.00 453.05 L755.00 452.32 L757.00 451.61 L759.00 450.90 L761.00 450.22 L763.00 449.55 L765.00 448.90 L767.00 448.27 L769.00 447.65 L771.00 447.05 L773.00 446.47 L775.00 445.91 L777.00 445.37 L779.00 444.84 L781.00 444.34 L783.00 443.85 L785.00 443.39 L787.00 442.94 L789.00 442.52 L791.00 442.11 L793.00 441.73 L795.00 441.36 L797.00 441.02 L799.00 440.70 L801.00 440.40 L803.00 440.12 L805.00 439.87 L807.00 439.63 L809.00 439.42 L811.00 439.23 L813.00 439.06 L815.00 438.91 L817.00 438.79 L819.00 438.68 L821.00 438.60 L823.00 438.55 L825.00 438.51 L827.00 438.50 L829.00 438.51 L831.00 438.54 L833.00 438.60 L835.00 438.68 L837.00 438.77 L839.00 438.90 L841.00 439.04 L843.00 439.21 L845.00 439.40 L847.00 439.61 L849.00 439.84 L851.00 440.09 L853.00 440.37 L855.00 440.67 L857.00 440.99 L859.00 441.33 L861.00 441.69 L863.00 442.07 L865.00 442.47 L867.00 442.90 L869.00 443.34 L871.00 443.80 L873.00 444.29 L875.00 444.79 L877.00 445.31 L879.00 445.85 L881.00 446.41 L883.00 446.99 L885.00 447.59 L887.00 448.20 L889.00 448.84 L891.00 449.48 L893.00 450.15 L895.00 450.83 L897.00 451.53 L899.00 452.25 L901.00 452.98 L903.00 453.72 L905.00 454.48 L907.00 455.26 L909.00 456.05 L911.00 456.85 L913.00 457.67 L915.00 458.49 L917.00 459.34 L919.00 460.19 L921.00 461.05 L923.00 461.93 L925.00 462.81 L927.00 463.71 L929.00 464.62 L931.00 465.53 L933.00 466.46 L935.00 467.39 L937.00 468.33 L939.00 469.28 L941.00 470.23 L943.00 471.19 L945.00 472.16 L947.00 473.13 L949.00 474.11 L951.00 475.09 L953.00 476.08 L955.00 477.07 L957.00 478.06 L959.00 479.05 L961.00 480.05 L963.00 481.05 L965.00 482.05 L967.00 483.05 L969.00 484.05 L971.00 485.05 L973.00 486.05 L975.00 487.04 L977.00 488.04 L979.00 489.03 L981.00 490.02 L983.00 491.00 L985.00 491.99 L987.00 492.96 L989.00 493.94 L991.00 494.90 L993.00 495.86 L995.00 496.82 L997.00 497.76 L999.00 498.70 L1001.00 499.63 L1003.00 500.56 L1005.00 501.47 L1007.00 502.38 L1009.00 503.27 L1011.00 504.16 L1013.00 505.03 L1015.00 505.90 L1017.00 506.75 L1019.00 507.59 L1021.00 508.41 L1023.00 509.23 L1025.00 510.03 L1027.00 510.82 L1029.00 511.59 L1031.00 512.35 L1033.00 513.09 L1035.00 513.82 L1037.00 514.54 L1039.00 515.23 L1041.00 515.91 L1043.00 516.58 L1045.00 517.23 L1047.00 517.86 L1049.00 518.47 L1051.00 519.06 L1053.00 519.64 L1055.00 520.20 L1057.00 520.74 L1059.00 521.26 L1061.00 521.76 L1063.00 522.24 L1065.00 522.70 L1067.00 523.14 L1069.00 523.57 L1071.00 523.97 L1073.00 524.35 L1075.00 524.71 L1077.00 525.04 L1079.00 525.36 L1081.00 525.66 L1083.00 525.93 L1085.00 526.18 L1087.00 526.41 L1089.00 526.62 L1091.00 526.81 L1093.00 526.97 L1095.00 527.12 L1097.00 527.24 L1099.00 527.33 L1101.00 527.41 L1103.00 527.46 L1105.00 527.49 L1107.00 527.50 L1109.00 527.49 L1111.00 527.45 L1113.00 527.39 L1115.00 527.31 L1117.00 527.20 L1119.00 527.08 L1121.00 526.93 L1123.00 526.76 L1125.00 526.56 L1127.00 526.35 L1129.00 526.11 L1131.00 525.85 L1133.00 525.57 L1135.00 525.27 L1137.00 524.95 L1139.00 524.60 L1141.00 524.24 L1143.00 523.85 L1145.00 523.44 L1147.00 523.02 L1149.00 522.57 L1151.00 522.10 L1153.00 521.61 L1155.00 521.11 L1157.00 520.58 L1159.00 520.04 L1161.00 519.47 L1163.00 518.89 L1165.00 518.29 L1167.00 517.67 L1169.00 517.04 L1171.00 516.38 L1173.00 515.71 L1175.00 515.03 L1177.00 514.33 L1179.00 513.61 L1181.00 512.87 L1183.00 512.13 L1185.00 511.36 L1187.00 510.58 L1189.00 509.79 L1191.00 508.99 L1193.00 508.17 L1195.00 507.34 L1197.00 506.50 L1199.00 505.64 L1201.00 504.77 L1203.00 503.90 L1205.00 503.01 L1207.00 502.11 L1209.00 501.20 L1211.00 500.29 L1213.00 499.36 L1215.00 498.43 L1217.00 497.48 L1219.00 496.53 L1221.00 495.58 L1223.00 494.62 L1225.00 493.65 L1227.00 492.67 L1229.00 491.70 L1231.00 490.71 L1233.00 489.73 L1235.00 488.74 L1237.00 487.74 L1239.00 486.75 L1241.00 485.75 L1243.00 484.75 L1245.00 483.75" stroke="#4644dc" stroke-width="2.5" fill="none" stroke-dasharray="10.5 4 2.5 4"/><path d="M361.00 438.59 L363.00 436.86 L365.00 435.14 L367.00 433.44 L369.00 431.75 L371.00 430.07 L373.00 428.40 L375.00 426.74 L377.00 425.10 L379.00 423.47 L381.00 421.86 L383.00 420.25 L385.00 418.66 L387.00 417.09 L389.00 415.53 L391.00 413.98 L393.00 412.45 L395.00 410.93 L397.00 409.42 L399.00 407.93 L401.00 406.46 L403.00 405.00 L405.00 403.56 L407.00 402.13 L409.00 400.72 L411.00 399.32 L413.00 397.94 L415.00 396.58 L417.00 395.23 L419.00 393.90 L421.00 392.59 L423.00 391.29 L425.00 390.01 L427.00 388.75 L429.00 387.51 L431.00 386.28 L433.00 385.07 L435.00 383.88 L437.00 382.71 L439.00 381.56 L441.00 380.42 L443.00 379.30 L445.00 378.21 L447.00 377.13 L449.00 376.07 L451.00 375.02 L453.00 374.00 L455.00 373.00 L457.00 372.01 L459.00 371.05 L461.00 370.11 L463.00 369.18 L465.00 368.28 L467.00 367.39 L469.00 366.53 L471.00 365.69 L473.00 364.86 L475.00 364.06 L477.00 363.28 L479.00 362.52 L481.00 361.78 L483.00 361.06 L485.00 360.36 L487.00 359.68 L489.00 359.03 L491.00 358.39 L493.00 357.78 L495.00 357.19 L497.00 356.62 L499.00 356.07 L501.00 355.54 L503.00 355.03 L505.00 354.55 L507.00 354.09 L509.00 353.65 L511.00 353.23 L513.00 352.83 L515.00 352.46 L517.00 352.11 L519.00 351.78 L521.00 351.47 L523.00 351.18 L525.00 350.92 L527.00 350.68 L529.00 350.46 L531.00 350.26 L533.00 350.09 L535.00 349.94 L537.00 349.81 L539.00 349.70 L541.00 349.62 L543.00 349.56 L545.00 349.52 L547.00 349.50 L549.00 349.51 L551.00 349.53 L553.00 349.58 L555.00 349.66 L557.00 349.75 L559.00 349.87 L561.00 350.01 L563.00 350.17 L565.00 350.36 L567.00 350.57 L569.00 350.80 L571.00 351.05 L573.00 351.32 L575.00 351.62 L577.00 351.94 L579.00 352.28 L581.00 352.64 L583.00 353.03 L585.00 353.44 L587.00 353.86 L589.00 354.32 L591.00 354.79 L593.00 355.28 L595.00 355.80 L597.00 356.34 L599.00 356.90 L601.00 357.48 L603.00 358.08 L605.00 358.71 L607.00 359.35 L609.00 360.02 L611.00 360.71 L613.00 361.42 L615.00 362.15 L617.00 362.90 L619.00 363.67 L621.00 364.46 L623.00 365.27 L625.00 366.11 L627.00 366.96 L629.00 367.83 L631.00 368.73 L633.00 369.64 L635.00 370.58 L637.00 371.53 L639.00 372.50 L641.00 373.50 L643.00 374.51 L645.00 375.54 L647.00 376.59 L649.00 377.66 L651.00 378.75 L653.00 379.86 L655.00 380.99 L657.00 382.13 L659.00 383.29 L661.00 384.48 L663.00 385.68 L665.00 386.89 L667.00 388.13 L669.00 389.38 L671.00 390.65 L673.00 391.94 L675.00 393.24 L677.00 394.57 L679.00 395.90 L681.00 397.26 L683.00 398.63 L685.00 400.02 L687.00 401.42 L689.00 402.84 L691.00 404.28 L693.00 405.73 L695.00 407.20 L697.00 408.68 L699.00 410.17 L701.00 411.68 L703.00 413.21 L705.00 414.75 L707.00 416.31 L709.00 417.87 L711.00 419.46 L713.00 421.05 L715.00 422.66 L717.00 424.29 L719.00 425.92 L721.00 427.57 L723.00 429.23 L725.00 430.91 L727.00 432.59 L729.00 434.29 L731.00 436.00 L733.00 437.72 L735.00 439.45 L737.00 441.20 L739.00 442.95 L741.00 444.72 L743.00 446.49 L745.00 448.28 L747.00 450.07 L749.00 451.88 L751.00 453.70 L753.00 455.52 L755.00 457.35 L757.00 459.20 L759.00 461.05 L761.00 462.91 L763.00 464.77 L765.00 466.65 L767.00 468.53 L769.00 470.42 L771.00 472.32 L773.00 474.23 L775.00 476.14 L777.00 478.06 L779.00 479.98 L781.00 481.91 L783.00 483.85 L785.00 485.79 L787.00 487.74 L789.00 489.69 L791.00 491.65 L793.00 493.61 L795.00 495.57 L797.00 497.54 L799.00 499.51 L801.00 501.49 L803.00 503.47 L805.00 505.46 L807.00 507.44 L809.00 509.43 L811.00 511.42 L813.00 513.41 L815.00 515.41 L817.00 517.40 L819.00 519.40 L821.00 521.40 L823.00 523.40 L825.00 525.40 L827.00 527.40 L829.00 529.40 L831.00 531.40 L833.00 533.40 L835.00 535.40 L837.00 537.39 L839.00 539.39 L841.00 541.38 L843.00 543.38 L845.00 545.37 L847.00 547.36 L849.00 549.34 L851.00 551.33 L853.00 553.31 L855.00 555.28 L857.00 557.26 L859.00 559.23 L861.00 561.19 L863.00 563.16 L865.00 565.11 L867.00 567.06 L869.00 569.01 L871.00 570.95 L873.00 572.89 L875.00 574.82 L877.00 576.75 L879.00 578.67 L881.00 580.58 L883.00 582.48 L885.00 584.38 L887.00 586.27 L889.00 588.16 L891.00 590.03 L893.00 591.90 L895.00 593.76 L897.00 595.62 L899.00 597.46 L901.00 599.29 L903.00 601.12 L905.00 602.94 L907.00 604.74 L909.00 606.54 L911.00 608.33 L913.00 610.10 L915.00 611.87 L917.00 613.62 L919.00 615.37 L921.00 617.10 L923.00 618.83 L925.00 620.54 L927.00 622.24 L929.00 623.92 L931.00 625.60 L933.00 627.26 L935.00 628.91 L937.00 630.55 L939.00 632.17 L941.00 633.78 L943.00 635.38 L945.00 636.96 L947.00 638.54 L949.00 640.09 L951.00 641.63 L953.00 643.16 L955.00 644.67 L957.00 646.17 L959.00 647.65 L961.00 649.12 L963.00 650.58 L965.00 652.01 L967.00 653.43 L969.00 654.84 L971.00 656.23 L973.00 657.60 L975.00 658.96 L977.00 660.30 L979.00 661.62 L981.00 662.93 L983.00 664.22 L985.00 665.49 L987.00 666.74 L989.00 667.98 L991.00 669.20 L993.00 670.40 L995.00 671.59 L997.00 672.75 L999.00 673.90 L1001.00 675.03 L1003.00 676.14 L1005.00 677.23 L1007.00 678.30 L1009.00 679.35 L1011.00 680.39 L1013.00 681.40 L1015.00 682.40 L1017.00 683.37 L1019.00 684.33 L1021.00 685.26 L1023.00 686.18 L1025.00 687.08 L1027.00 687.95 L1029.00 688.81 L1031.00 689.64 L1033.00 690.46 L1035.00 691.25 L1037.00 692.03 L1039.00 692.78 L1041.00 693.51 L1043.00 694.22 L1045.00 694.91 L1047.00 695.58 L1049.00 696.23 L1051.00 696.85 L1053.00 697.46 L1055.00 698.04 L1057.00 698.61 L1059.00 699.15 L1061.00 699.66 L1063.00 700.16 L1065.00 700.64 L1067.00 701.09 L1069.00 701.52 L1071.00 701.93 L1073.00 702.32 L1075.00 702.68 L1077.00 703.03 L1079.00 703.35 L1081.00 703.65 L1083.00 703.92 L1085.00 704.18 L1087.00 704.41 L1089.00 704.62 L1091.00 704.81 L1093.00 704.97 L1095.00 705.12 L1097.00 705.24 L1099.00 705.33 L1101.00 705.41 L1103.00 705.46 L1105.00 705.49 L1107.00 705.50 L1109.00 705.49 L1111.00 705.45 L1113.00 705.39 L1115.00 705.31 L1117.00 705.20 L1119.00 705.08 L1121.00 704.93 L1123.00 704.75 L1125.00 704.56 L1127.00 704.34 L1129.00 704.11 L1131.00 703.84 L1133.00 703.56 L1135.00 703.26 L1137.00 702.93 L1139.00 702.58 L1141.00 702.21 L1143.00 701.81 L1145.00 701.40 L1147.00 700.96 L1149.00 700.50 L1151.00 700.02 L1153.00 699.51 L1155.00 698.99 L1157.00 698.44 L1159.00 697.87 L1161.00 697.28 L1163.00 696.67 L1165.00 696.04 L1167.00 695.38 L1169.00 694.71 L1171.00 694.01 L1173.00 693.30 L1175.00 692.56 L1177.00 691.80 L1179.00 691.02 L1181.00 690.22 L1183.00 689.40 L1185.00 688.56 L1187.00 687.69 L1189.00 686.81 L1191.00 685.91 L1193.00 684.99 L1195.00 684.05 L1197.00 683.08 L1199.00 682.10 L1201.00 681.10 L1203.00 680.08 L1205.00 679.04 L1207.00 677.98 L1209.00 676.91 L1211.00 675.81 L1213.00 674.69 L1215.00 673.56 L1217.00 672.41 L1219.00 671.24 L1221.00 670.05 L1223.00 668.84 L1225.00 667.62 L1227.00 666.37 L1229.00 665.11 L1231.00 663.84 L1233.00 662.54 L1235.00 661.23 L1237.00 659.90 L1239.00 658.56 L1241.00 657.20 L1243.00 655.82 L1245.00 654.42" stroke="#48844c" stroke-width="2.5" fill="none" stroke-dasharray="6.5 4"/><path d="M361.00 616.41 L363.00 618.14 L365.00 619.86 L367.00 621.56 L369.00 623.25 L371.00 624.93 L373.00 626.60 L375.00 628.26 L377.00 629.90 L379.00 631.53 L381.00 633.14 L383.00 634.75 L385.00 636.34 L387.00 637.91 L389.00 639.47 L391.00 641.02 L393.00 642.55 L395.00 644.07 L397.00 645.58 L399.00 647.07 L401.00 648.54 L403.00 650.00 L405.00 651.44 L407.00 652.87 L409.00 654.28 L411.00 655.68 L413.00 657.06 L415.00 658.42 L417.00 659.77 L419.00 661.10 L421.00 662.41 L423.00 663.71 L425.00 664.99 L427.00 666.25 L429.00 667.49 L431.00 668.72 L433.00 669.93 L435.00 671.12 L437.00 672.29 L439.00 673.44 L441.00 674.58 L443.00 675.70 L445.00 676.79 L447.00 677.87 L449.00 678.93 L451.00 679.98 L453.00 681.00 L455.00 682.00 L457.00 682.99 L459.00 683.95 L461.00 684.89 L463.00 685.82 L465.00 686.72 L467.00 687.61 L469.00 688.47 L471.00 689.31 L473.00 690.14 L475.00 690.94 L477.00 691.72 L479.00 692.48 L481.00 693.22 L483.00 693.94 L485.00 694.64 L487.00 695.32 L489.00 695.97 L491.00 696.61 L493.00 697.22 L495.00 697.81 L497.00 698.38 L499.00 698.93 L501.00 699.46 L503.00 699.97 L505.00 700.45 L507.00 700.91 L509.00 701.35 L511.00 701.77 L513.00 702.17 L515.00 702.54 L517.00 702.89 L519.00 703.22 L521.00 703.53 L523.00 703.82 L525.00 704.08 L527.00 704.32 L529.00 704.54 L531.00 704.74 L533.00 704.91 L535.00 705.06 L537.00 705.19 L539.00 705.30 L541.00 705.38 L543.00 705.44 L545.00 705.48 L547.00 705.50 L549.00 705.49 L551.00 705.47 L553.00 705.42 L555.00 705.34 L557.00 705.25 L559.00 705.13 L561.00 704.99 L563.00 704.83 L565.00 704.64 L567.00 704.43 L569.00 704.20 L571.00 703.95 L573.00 703.68 L575.00 703.38 L577.00 703.06 L579.00 702.72 L581.00 702.36 L583.00 701.97 L585.00 701.56 L587.00 701.14 L589.00 700.68 L591.00 700.21 L593.00 699.72 L595.00 699.20 L597.00 698.66 L599.00 698.10 L601.00 697.52 L603.00 696.92 L605.00 696.29 L607.00 695.65 L609.00 694.98 L611.00 694.29 L613.00 693.58 L615.00 692.85 L617.00 692.10 L619.00 691.33 L621.00 690.54 L623.00 689.73 L625.00 688.89 L627.00 688.04 L629.00 687.17 L631.00 686.27 L633.00 685.36 L635.00 684.42 L637.00 683.47 L639.00 682.50 L641.00 681.50 L643.00 680.49 L645.00 679.46 L647.00 678.41 L649.00 677.34 L651.00 676.25 L653.00 675.14 L655.00 674.01 L657.00 672.87 L659.00 671.71 L661.00 670.52 L663.00 669.32 L665.00 668.11 L667.00 666.87 L669.00 665.62 L671.00 664.35 L673.00 663.06 L675.00 661.76 L677.00 660.43 L679.00 659.10 L681.00 657.74 L683.00 656.37 L685.00 654.98 L687.00 653.58 L689.00 652.16 L691.00 650.72 L693.00 649.27 L695.00 647.80 L697.00 646.32 L699.00 644.83 L701.00 643.32 L703.00 641.79 L705.00 640.25 L707.00 638.69 L709.00 637.13 L711.00 635.54 L713.00 633.95 L715.00 632.34 L717.00 630.71 L719.00 629.08 L721.00 627.43 L723.00 625.77 L725.00 624.09 L727.00 622.41 L729.00 620.71 L731.00 619.00 L733.00 617.28 L735.00 615.55 L737.00 613.80 L739.00 612.05 L741.00 610.28 L743.00 608.51 L745.00 606.72 L747.00 604.93 L749.00 603.12 L751.00 601.30 L753.00 599.48 L755.00 597.65 L757.00 595.80 L759.00 593.95 L761.00 592.09 L763.00 590.23 L765.00 588.35 L767.00 586.47 L769.00 584.58 L771.00 582.68 L773.00 580.77 L775.00 578.86 L777.00 576.94 L779.00 575.02 L781.00 573.09 L783.00 571.15 L785.00 569.21 L787.00 567.26 L789.00 565.31 L791.00 563.35 L793.00 561.39 L795.00 559.43 L797.00 557.46 L799.00 555.49 L801.00 553.51 L803.00 551.53 L805.00 549.54 L807.00 547.56 L809.00 545.57 L811.00 543.58 L813.00 541.59 L815.00 539.59 L817.00 537.60 L819.00 535.60 L821.00 533.60 L823.00 531.60 L825.00 529.60 L827.00 527.60 L829.00 525.60 L831.00 523.60 L833.00 521.60 L835.00 519.60 L837.00 517.61 L839.00 515.61 L841.00 513.62 L843.00 511.62 L845.00 509.63 L847.00 507.64 L849.00 505.66 L851.00 503.67 L853.00 501.69 L855.00 499.72 L857.00 497.74 L859.00 495.77 L861.00 493.81 L863.00 491.84 L865.00 489.89 L867.00 487.94 L869.00 485.99 L871.00 484.05 L873.00 482.11 L875.00 480.18 L877.00 478.25 L879.00 476.33 L881.00 474.42 L883.00 472.52 L885.00 470.62 L887.00 468.73 L889.00 466.84 L891.00 464.97 L893.00 463.10 L895.00 461.24 L897.00 459.38 L899.00 457.54 L901.00 455.71 L903.00 453.88 L905.00 452.06 L907.00 450.26 L909.00 448.46 L911.00 446.67 L913.00 444.90 L915.00 443.13 L917.00 441.38 L919.00 439.63 L921.00 437.90 L923.00 436.17 L925.00 434.46 L927.00 432.76 L929.00 431.08 L931.00 429.40 L933.00 427.74 L935.00 426.09 L937.00 424.45 L939.00 422.83 L941.00 421.22 L943.00 419.62 L945.00 418.04 L947.00 416.46 L949.00 414.91 L951.00 413.37 L953.00 411.84 L955.00 410.33 L957.00 408.83 L959.00 407.35 L961.00 405.88 L963.00 404.42 L965.00 402.99 L967.00 401.57 L969.00 400.16 L971.00 398.77 L973.00 397.40 L975.00 396.04 L977.00 394.70 L979.00 393.38 L981.00 392.07 L983.00 390.78 L985.00 389.51 L987.00 388.26 L989.00 387.02 L991.00 385.80 L993.00 384.60 L995.00 383.41 L997.00 382.25 L999.00 381.10 L1001.00 379.97 L1003.00 378.86 L1005.00 377.77 L1007.00 376.70 L1009.00 375.65 L1011.00 374.61 L1013.00 373.60 L1015.00 372.60 L1017.00 371.63 L1019.00 370.67 L1021.00 369.74 L1023.00 368.82 L1025.00 367.92 L1027.00 367.05 L1029.00 366.19 L1031.00 365.36 L1033.00 364.54 L1035.00 363.75 L1037.00 362.97 L1039.00 362.22 L1041.00 361.49 L1043.00 360.78 L1045.00 360.09 L1047.00 359.42 L1049.00 358.77 L1051.00 358.15 L1053.00 357.54 L1055.00 356.96 L1057.00 356.39 L1059.00 355.85 L1061.00 355.34 L1063.00 354.84 L1065.00 354.36 L1067.00 353.91 L1069.00 353.48 L1071.00 353.07 L1073.00 352.68 L1075.00 352.32 L1077.00 351.97 L1079.00 351.65 L1081.00 351.35 L1083.00 351.08 L1085.00 350.82 L1087.00 350.59 L1089.00 350.38 L1091.00 350.19 L1093.00 350.03 L1095.00 349.88 L1097.00 349.76 L1099.00 349.67 L1101.00 349.59 L1103.00 349.54 L1105.00 349.51 L1107.00 349.50 L1109.00 349.51 L1111.00 349.55 L1113.00 349.61 L1115.00 349.69 L1117.00 349.80 L1119.00 349.92 L1121.00 350.07 L1123.00 350.25 L1125.00 350.44 L1127.00 350.66 L1129.00 350.89 L1131.00 351.16 L1133.00 351.44 L1135.00 351.74 L1137.00 352.07 L1139.00 352.42 L1141.00 352.79 L1143.00 353.19 L1145.00 353.60 L1147.00 354.04 L1149.00 354.50 L1151.00 354.98 L1153.00 355.49 L1155.00 356.01 L1157.00 356.56 L1159.00 357.13 L1161.00 357.72 L1163.00 358.33 L1165.00 358.96 L1167.00 359.62 L1169.00 360.29 L1171.00 360.99 L1173.00 361.70 L1175.00 362.44 L1177.00 363.20 L1179.00 363.98 L1181.00 364.78 L1183.00 365.60 L1185.00 366.44 L1187.00 367.31 L1189.00 368.19 L1191.00 369.09 L1193.00 370.01 L1195.00 370.95 L1197.00 371.92 L1199.00 372.90 L1201.00 373.90 L1203.00 374.92 L1205.00 375.96 L1207.00 377.02 L1209.00 378.09 L1211.00 379.19 L1213.00 380.31 L1215.00 381.44 L1217.00 382.59 L1219.00 383.76 L1221.00 384.95 L1223.00 386.16 L1225.00 387.38 L1227.00 388.63 L1229.00 389.89 L1231.00 391.16 L1233.00 392.46 L1235.00 393.77 L1237.00 395.10 L1239.00 396.44 L1241.00 397.80 L1243.00 399.18 L1245.00 400.58" stroke="#48844c" stroke-width="2.5" fill="none" stroke-dasharray="10.5 4 2.5 4"/><g font-family="Liberation Sans, Arial, sans-serif" font-size="16" stroke="#fff" stroke-width="2.5" stroke-linejoin="round" paint-order="stroke"><text x="366.3" y="418.2" fill="#006400">u</text><text x="375.0" y="425.4" font-size="13.5" fill="#006400">C</text><text x="411.3" y="431.1" fill="#4b2585">E</text><text x="421.7" y="437.9" font-size="13.5" fill="#4b2585">tot</text><text x="367.0" y="461.9" fill="#1a1acc">E</text><text x="378.3" y="468.8" font-size="13.5" fill="#1a1acc">L</text><text x="366.0" y="518.6" fill="#1a1acc">E</text><text x="377.0" y="525.8" font-size="13.5" fill="#1a1acc">C</text><text x="366.3" y="632.5" fill="#006400">u</text><text x="375.6" y="639.5" font-size="13.5" fill="#006400">L</text></g>
</svg>
<div class="evcb" style="left:33.0px;top:25.0px"><svg viewBox="0 0 28 28" width="28" height="28" style="position:absolute;left:-2px;top:-2px"><path d="M5 15.6 L10.5 21 L21.3 6.9" fill="none" stroke="#444" stroke-width="3.7" stroke-linecap="round" stroke-linejoin="round"/></svg></div>
<div class="evcb" style="left:32.0px;top:60.0px"></div>
<div class="evcb" style="left:31.0px;top:97.0px"><svg viewBox="0 0 28 28" width="28" height="28" style="position:absolute;left:-2px;top:-2px"><path d="M5 15.6 L10.5 21 L21.3 6.9" fill="none" stroke="#444" stroke-width="3.7" stroke-linecap="round" stroke-linejoin="round"/></svg></div>
<div class="stylebtn" style="left:836px;top:-1px;width:47px;height:44px;border-radius:0 0 0 6px;border-top:none;border-right:none"><svg viewBox="1198 53 46 43" width="46" height="43" style="position:absolute;left:0;top:1px"><path d="M1207 65.5h19.5 M1207 74h10 M1207 82.5h9.5" stroke="#999" stroke-width="2.4"/><circle cx="1223.3" cy="77.6" r="6" fill="#9999ff" stroke="#3c3c9c" stroke-width="0.9"/><path d="M1229.4 64.4 L1236.8 77 H1221.9 Z" fill="rgba(120,120,255,0.8)" stroke="#33338c" stroke-width="0.9" stroke-linejoin="round"/></svg></div>
<div style="position:absolute;left:831px;top:634.7px;width:36px;height:36px;border-radius:50%;background:#fff;box-shadow:0 1px 3px rgba(0,0,0,0.28)"><svg viewBox="1192 688 36 36" width="36" height="36"><path d="M1210 697.8 L1218.2 704.9 H1215.8 V711.7 H1212.1 V706.7 H1208 V711.7 H1204.2 V704.9 H1201.8 Z" fill="#6e6e6e"/></svg></div>
<div style="position:absolute;left:831px;top:678.0px;width:36px;height:36px;border-radius:50%;background:#fff;box-shadow:0 1px 3px rgba(0,0,0,0.22)"></div>
<div class="evt" id="evt0" style="left:69.1px;top:30.56px;letter-spacing:0.047px;color:#0d6b0d;">tensions/U<sub>0</sub></div>
<div class="evt" id="evt1" style="left:68.4px;top:65.96px;letter-spacing:0.068px;color:#d01414;">puissances/CU<sub>0</sub>²ω<sub>0</sub></div>
<div class="evt" id="evt2" style="left:67.2px;top:103.26px;letter-spacing:0.017px;color:#1a1ad0;">énergies/CU<sub>0</sub>²</div>
<div class="evt" id="evt3" style="left:295.0px;top:80.38px;letter-spacing:0.010px;color:#cc6600;font-size:22px;">Circuit L,C (condensateur initialement chargé)</div>

</div>
<div id="rs"><b></b><u></u></div>
</body></html>
